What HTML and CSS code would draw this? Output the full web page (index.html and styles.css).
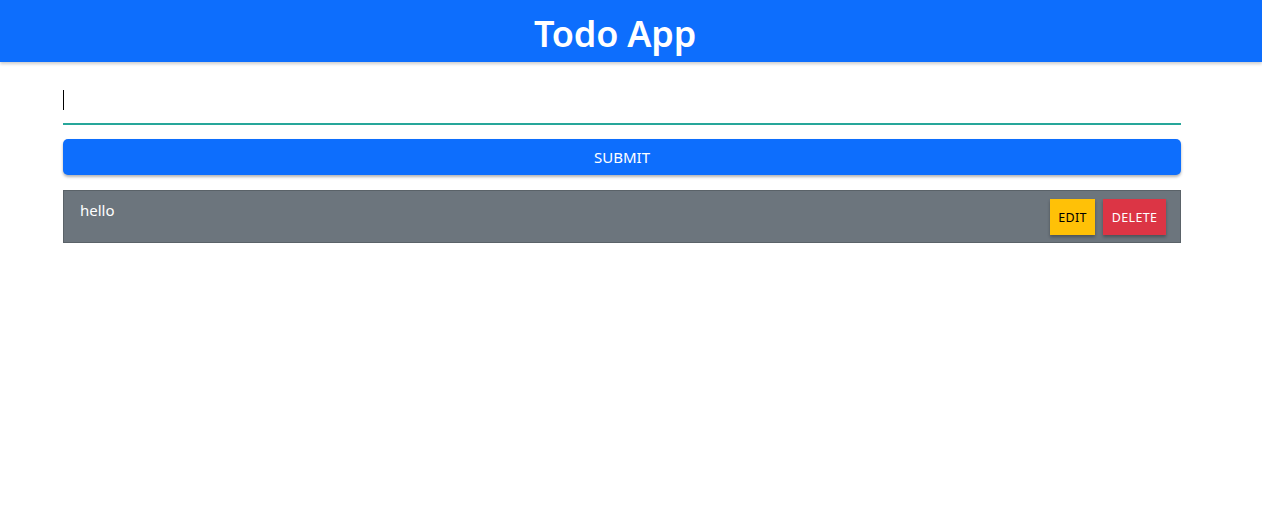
FILE: index.html
```html
<!DOCTYPE html>
<html>
<head>
<meta charset="utf-8">
<link rel="stylesheet" href="styles.css">
</head>
<body>
<header class="app-header"><h1 class="title">Todo App</h1></header>
<main class="container">
  <div class="input-field"><span class="caret"></span></div>
  <button class="submit">SUBMIT</button>
  <ul class="todo-list">
    <li class="todo-item">
      <span class="todo-text">hello</span>
      <div class="actions">
        <button class="btn edit">EDIT</button>
        <button class="btn delete">DELETE</button>
      </div>
    </li>
  </ul>
</main>
</body>
</html>
```
FILE: styles.css
```css
* { box-sizing: border-box; }
body {
  margin: 0;
  font-family: "Noto Sans", "Open Sans", sans-serif;
  background: #fff;
}
.app-header {
  height: 62px;
  background: #0d6efd;
  box-shadow: 0 2px 3px rgba(0,0,0,0.2);
  display: flex;
  justify-content: center;
  align-items: center;
  padding-right: 32px;
}
.title {
  margin: 0;
  color: #fff;
  font-size: 36px;
  font-weight: 600;
  letter-spacing: -0.2px;
  line-height: 1;
  padding-top: 6px;
}
.container {
  margin-left: 63px;
  width: 1118px;
  padding-top: 28px;
}
.input-field {
  height: 35px;
  border-bottom: 2px solid #26a69a;
  position: relative;
}
.caret {
  position: absolute;
  left: 0;
  top: 0;
  width: 1px;
  height: 20px;
  background: #000;
}
.submit {
  display: block;
  width: 100%;
  height: 36px;
  margin-top: 14px;
  border: none;
  border-radius: 5px;
  background: #0d6efd;
  color: #fff;
  font-family: inherit;
  font-size: 15px;
  box-shadow: 0 2px 3px rgba(0,0,0,0.3);
}
.todo-list {
  list-style: none;
  margin: 15px 0 0;
  padding: 0;
}
.todo-item {
  height: 53px;
  background: #6c757d;
  border: 1px solid #5a6268;
  display: flex;
  justify-content: space-between;
  align-items: flex-start;
  padding: 8px 14px 0 16px;
}
.todo-text {
  color: #fff;
  font-size: 15px;
  line-height: 20px;
  padding-top: 1px;
}
.actions {
  display: flex;
  gap: 8px;
}
.btn {
  height: 36px;
  border: none;
  border-radius: 0;
  font-family: inherit;
  font-size: 12.5px;
  letter-spacing: 0.3px;
  box-shadow: 0 2px 3px rgba(0,0,0,0.3);
  padding: 0;
}
.edit { width: 45px; background: #ffc107; color: #000; }
.delete { width: 63px; background: #dc3545; color: #fff; }
```
